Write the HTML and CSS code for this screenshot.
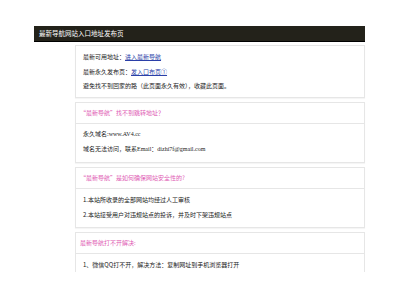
FILE: index.html
```html
<!DOCTYPE html>
<html lang="zh-CN">
<head>
    <meta charset="UTF-8">
    <title>最新导航网站入口地址发布页</title>
    <link rel="stylesheet" href="styles.css">
</head>
<body>
    <div class="page">
        <div class="topbar">最新导航网站入口地址发布页</div>

        <div class="main">
            <div class="card">
                <div class="card-body intro">
                    <p>最新可用地址：<a href="#">进入最新导航</a></p>
                    <p>最新永久发布页：<a href="#">发入口布页①</a></p>
                    <p>避免找不到回家的路（此页面永久有效），收藏此页面。</p>
                </div>
            </div>

            <div class="card">
                <div class="card-head">“最新导航”找不到跳转地址？</div>
                <div class="card-body serif">
                    <p>永久域名:www.AV4.cc</p>
                    <p>域名无法访问，联系Email：dizhi7f@gmail.com</p>
                </div>
            </div>

            <div class="card">
                <div class="card-head">“最新导航”是如何确保网站安全性的?</div>
                <div class="card-body">
                    <p>1.本站所收录的全部网站均经过人工审核</p>
                    <p>2.本站接受用户对违规站点的投诉，并及时下架违规站点</p>
                </div>
            </div>

            <div class="card last">
                <div class="card-head">最新导航打不开解决:</div>
                <div class="card-body">
                    <p>1、微信QQ打不开，解决方法：复制网址到手机浏览器打开</p>
                </div>
            </div>
        </div>
    </div>
</body>
</html>
```

FILE: styles.css
```css
:root {
    --bar-color: #23221a;
    --text-color: #222222;
    --pink: #e05bb4;
    --link-color: #2b3fa8;
    --border-color: #e6e6e6;
}

body {
    margin: 0;
    background-color: #ffffff;
    color: var(--text-color);
    font-family: "Noto Sans CJK SC", "Noto Sans", sans-serif;
    font-size: 6px;
}

p {
    margin: 0;
}

.page {
    width: 331px;
    margin: 26px 0 0 34px;
}

.topbar {
    height: 15px;
    line-height: 15px;
    padding-left: 5px;
    background-color: var(--bar-color);
    border-bottom: 1px solid #000000;
    color: #ffffff;
    font-size: 6.5px;
}

.main {
    margin: 3px 0 0 41px;
    display: flex;
    flex-direction: column;
    gap: 4px;
}

.card {
    border: 1px solid var(--border-color);
    box-shadow: 0 1px 1px rgba(0, 0, 0, 0.04);
    background-color: #ffffff;
}

.card-head {
    height: 20px;
    line-height: 20px;
    padding-left: 4px;
    border-bottom: 1px solid var(--border-color);
    color: var(--pink);
}

.card-body {
    padding: 3px 7px 5px;
    line-height: 15px;
}

.card-body.intro {
    padding: 4px 7px 3px;
    line-height: 14.5px;
}

.card-body.serif {
    font-family: "Liberation Serif", "Noto Sans CJK SC", serif;
}

.card.last {
    border-bottom: none;
    box-shadow: none;
}

.card.last .card-body {
    padding-bottom: 0;
}

a {
    color: var(--link-color);
    text-decoration: underline;
}
```
